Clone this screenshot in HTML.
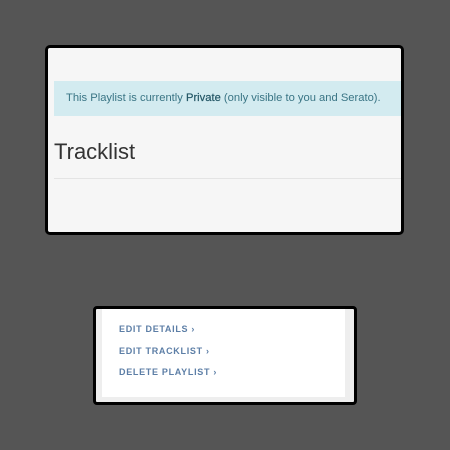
<!DOCTYPE html>
<html><head><style>
body{margin:0;width:450px;height:450px;background:#555;position:relative;overflow:hidden;font-family:"Liberation Sans",sans-serif}
.b1{position:absolute;left:45px;top:45px;width:353px;height:184px;border:3px solid #000;border-radius:5px;background:#f6f6f6;overflow:hidden}
.alert{position:absolute;left:6px;top:33px;width:360px;height:35px;background:#d3ebf0;color:#3a7585;font-size:11.2px;line-height:35px;padding-left:12px;box-sizing:border-box;white-space:nowrap}
.alert b{color:#245766;font-weight:normal;-webkit-text-stroke:0.2px #245766}
.h{position:absolute;left:6px;top:91px;font-size:22px;color:#333}
.hr{position:absolute;left:6px;top:130px;width:360px;height:1px;background:#e4e4e4}
.b2{position:absolute;left:93px;top:306px;width:258px;height:93px;border:3px solid #000;border-radius:4px;background:#eee;overflow:hidden}
.in{position:absolute;left:6px;top:0;width:243px;height:88px;background:#fff}
.l{position:absolute;left:17px;font-size:9px;font-weight:bold;color:#5c7ea6;letter-spacing:0.7px}
</style></head><body>
<div class="b1">
<div class="alert">This Playlist is currently <b>Private</b> (only visible to you and Serato).</div>
<div class="h">Tracklist</div>
<div class="hr"></div>
</div>
<div class="b2"><div class="in">
<div class="l" style="top:15px">EDIT DETAILS ›</div>
<div class="l" style="top:37px">EDIT TRACKLIST ›</div>
<div class="l" style="top:58px">DELETE PLAYLIST ›</div>
</div></div>
</body></html>
